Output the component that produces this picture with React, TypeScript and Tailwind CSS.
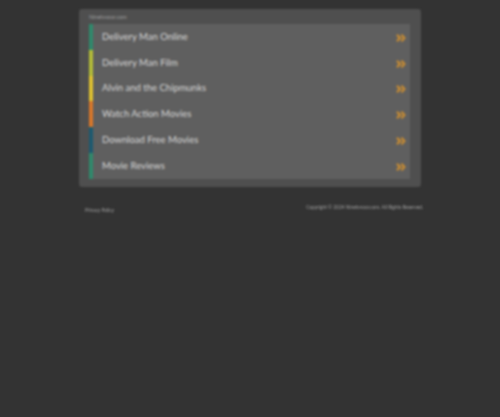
const rows = [
  { label: "Delivery Man Online", bar: "bg-[#2f8a6c]" },
  { label: "Delivery Man Film", bar: "bg-[#b4bd38]" },
  { label: "Alvin and the Chipmunks", bar: "bg-[#e0c230]" },
  { label: "Watch Action Movies", bar: "bg-[#d9772a]" },
  { label: "Download Free Movies", bar: "bg-[#1d5a70]" },
  { label: "Movie Reviews", bar: "bg-[#2f8a6c]" },
];

function Chevrons() {
  return (
    <svg width="10" height="8" viewBox="0 0 10 8" fill="none" stroke="#cf8f30" strokeWidth="2">
      <path d="M1 .8l3 3.2-3 3.2" />
      <path d="M5.4 .8l3 3.2-3 3.2" />
    </svg>
  );
}

export default function App() {
  return (
    <div className="h-[417px] overflow-hidden bg-[#333333]">
      <div className="pt-[9px] font-['Lato',sans-serif] blur-[0.8px]">
        <div className="mx-auto w-[342px] rounded-[3px] bg-[#4f4f4f] pb-2 pl-[10px] pr-[11px] pt-[5px]">
          <div className="h-[10px] text-[5.4px] leading-[6px] text-[#a0a0a0]">Ninetvvoor.com</div>
          <div className="bg-[#5f5f5f]">
            {rows.map((row) => (
              <div key={row.label} className="flex h-[25.8px] items-center">
                <div className={"h-full w-1 " + row.bar}></div>
                <span className="ml-[9px] flex-1 text-[9.5px] text-[#d8d8d8]">{row.label}</span>
                <span className="mr-1 mt-[2px] flex items-center">
                  <Chevrons />
                </span>
              </div>
            ))}
          </div>
        </div>
        <div className="mx-auto mt-[17px] flex w-[342px] items-start justify-between px-[6px] text-[4.8px] text-[#a0a0a0]">
          <span className="mt-[3px]">Privacy Policy</span>
          <span className="-mr-2">Copyright © 2024 Ninetvvoor.com. All Rights Reserved.</span>
        </div>
      </div>
    </div>
  );
}
